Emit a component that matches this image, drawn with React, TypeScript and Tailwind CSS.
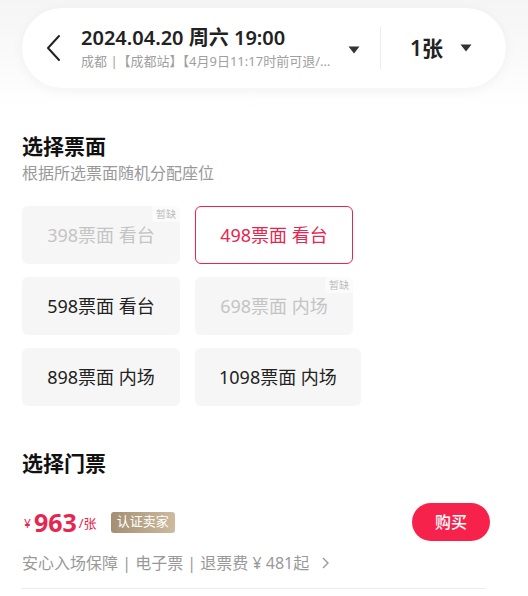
import React from "react";

const font = { fontFamily: '"Noto Sans", "Noto Sans CJK SC", sans-serif' };

function Tri() {
  return (
    <svg width="12" height="8" viewBox="0 0 12 8">
      <path d="M0.5 0.5 L11.5 0.5 L6 7.5 Z" fill="#333" />
    </svg>
  );
}

type Opt = { label: string; state: "off" | "on" | "sel" };

const opts: Opt[][] = [
  [
    { label: "398票面 看台", state: "off" },
    { label: "498票面 看台", state: "sel" },
  ],
  [
    { label: "598票面 看台", state: "on" },
    { label: "698票面 内场", state: "off" },
  ],
  [
    { label: "898票面 内场", state: "on" },
    { label: "1098票面 内场", state: "on" },
  ],
];

function Card({ o }: { o: Opt }) {
  if (o.state === "sel") {
    return (
      <div className="relative h-[58px] min-w-[158px] px-6 flex items-center justify-center rounded-[6px] border border-[#e8254e] bg-white text-[18px] text-[#e8254e]">
        {o.label}
      </div>
    );
  }
  if (o.state === "off") {
    return (
      <div className="relative h-[58px] min-w-[158px] px-6 flex items-center justify-center rounded-[6px] bg-[#f6f6f6] text-[18px] text-[#c4c4c4]">
        {o.label}
        <span className="absolute top-0 right-0 h-[16px] px-[4px] flex items-center rounded-bl-[4px] rounded-tr-[6px] bg-[#fbfbfb] text-[10px] leading-none text-[#bdbdbd]">
          暂缺
        </span>
      </div>
    );
  }
  return (
    <div className="relative h-[58px] min-w-[158px] px-6 flex items-center justify-center rounded-[6px] bg-[#f6f6f6] text-[18px] text-[#222]">
      {o.label}
    </div>
  );
}

export default function App() {
  return (
    <div className="w-[528px] h-[596px] overflow-hidden bg-white" style={font}>
      <div className="bg-gradient-to-b from-[#f5f5f5] to-white px-[22px] pt-[8px] pb-[22px]">
        <div className="h-[80px] rounded-full bg-white shadow-[0_2px_12px_rgba(0,0,0,0.05)] flex items-center pl-[22px] pr-[30px]">
          <svg width="18" height="28" viewBox="0 0 18 28" className="shrink-0">
            <path d="M15 2 L4 14 L15 26" fill="none" stroke="#222" strokeWidth="2" strokeLinecap="round" strokeLinejoin="round" />
          </svg>
          <div className="ml-[19px] w-[262px] shrink-0 flex flex-col">
            <div className="text-[20px] font-semibold leading-[24px] text-[#222] whitespace-nowrap">2024.04.20 周六 19:00</div>
            <div className="mt-[3px] text-[13px] leading-[17px] text-[#a0a0a0] whitespace-nowrap">
              成都 |【成都站】【4月9日11:17时前可退/…
            </div>
          </div>
          <div className="ml-[5px] mt-[4px] shrink-0">
            <Tri />
          </div>
          <div className="ml-[20px] w-px h-[42px] bg-[#ececec] shrink-0" />
          <div className="ml-[29px] text-[21px] font-semibold text-[#222] leading-none whitespace-nowrap shrink-0">1张</div>
          <div className="ml-[17px] shrink-0">
            <Tri />
          </div>
        </div>
      </div>

      <div className="px-[22px]">
        <div className="mt-[23px] text-[21px] font-bold leading-[26px] text-[#111]">选择票面</div>
        <div className="mt-[3px] text-[16px] leading-[22px] text-[#999]">根据所选票面随机分配座位</div>

        <div className="mt-[22px] flex flex-col gap-[13px]">
          {opts.map((row, i) => (
            <div key={i} className="flex gap-[15px]">
              {row.map((o, j) => (
                <Card key={j} o={o} />
              ))}
            </div>
          ))}
        </div>

        <div className="mt-[44px] text-[21px] font-bold leading-[26px] text-[#111]">选择门票</div>

        <div className="mt-[27px] flex items-center justify-between pr-[16px]">
          <div className="flex items-center">
            <span className="text-[12px] text-[#e8254e] mt-[4px] ml-[2px]">¥</span>
            <span className="ml-[3px] text-[25px] font-bold leading-none text-[#e8254e]">963</span>
            <span className="ml-[2px] text-[13px] text-[#e8254e] mt-[4px]">/张</span>
            <span className="ml-[14px] h-[21px] px-[6px] flex items-center rounded-[3px] bg-gradient-to-r from-[#a58f72] to-[#cdbb9f] text-[13px] text-white">
              认证卖家
            </span>
          </div>
          <button className="w-[78px] h-[38px] rounded-full bg-[#f7224c] text-white text-[16px] font-medium">购买</button>
        </div>

        <div className="mt-[11px] flex items-center text-[16px] leading-[22px] text-[#999]">
          安心入场保障 | 电子票 | 退票费 ¥ 481起
          <svg width="10" height="14" viewBox="0 0 10 14" className="ml-[12px]">
            <path d="M2 2 L7 7 L2 12" fill="none" stroke="#999" strokeWidth="1.4" />
          </svg>
        </div>
        <div className="mt-[14px] mr-[20px] h-px bg-[#eeeeee]" />
      </div>
    </div>
  );
}
